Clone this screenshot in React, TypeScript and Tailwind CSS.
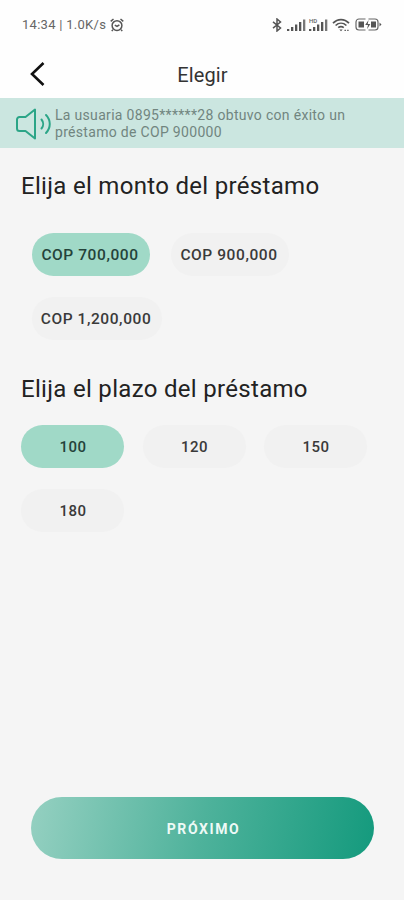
import { useState } from 'react';
import clsx from 'clsx';

const AMOUNTS = ['COP 700,000', 'COP 900,000', 'COP 1,200,000'];
const TERMS = ['100', '120', '150', '180'];

function SignalBars() {
  return (
    <svg width="19" height="13" viewBox="0 0 19 13" fill="#555">
      <rect x="0" y="11" width="2.3" height="2" />
      <rect x="4" y="9" width="2.3" height="4" />
      <rect x="8" y="6.5" width="2.3" height="6.5" />
      <rect x="12" y="4" width="2.3" height="9" />
      <rect x="16" y="1.5" width="2.3" height="11.5" opacity="0.8" />
    </svg>
  );
}

function StatusBar() {
  return (
    <div className="flex h-[49px] items-center pr-[22px] pl-[22px] text-[#666]">
      <span className="w-[85px] text-[13px] leading-none tracking-[0.28px] whitespace-nowrap">14:34 | 1.0K/s</span>
      {/* Alarm */}
      <svg className="ml-[3px]" width="14" height="14" viewBox="0 0 14 14" fill="none" stroke="#555" strokeWidth="1.5">
        <circle cx="7" cy="7.6" r="4.9" />
        <path d="M.7 3.3 3.5 1M13.3 3.3 10.5 1M2.9 11.6l-1.1 1.5M11.1 11.6l1.1 1.5M4.8 7.2 7 8.4l2.4-1.6" />
      </svg>

      <div className="ml-auto flex items-center">
        {/* Bluetooth */}
        <svg width="10" height="14" viewBox="0 0 10 14" fill="none" stroke="#555" strokeWidth="1.5">
          <path d="M1 3.8 8.5 10 5 13V1l3.5 3L1 10.2" />
        </svg>
        <div className="ml-[5px]">
          <SignalBars />
        </div>
        <div className="relative ml-[3px]">
          <SignalBars />
          <span className="absolute top-0 left-0 text-[6px] leading-none font-medium">HD</span>
        </div>
        {/* Wifi */}
        <svg className="ml-[4px]" width="18" height="14" viewBox="0 0 18 14" fill="none" stroke="#555" strokeWidth="1.7">
          <path d="M1 5.2c4.6-4.8 11.4-4.8 16 0M3.6 7.5c3.2-3 7.6-3 10.8 0M6.2 9.7c1.8-1.4 3.8-1.4 5.6 0" />
          <path d="M7.3 11.5h3.4L9 13.2z" fill="#555" stroke="none" />
          <path d="M12.5 12.4h1.4M15.2 12.4h1.4" strokeWidth="1.4" />
        </svg>
        {/* Battery */}
        <svg className="ml-[5px]" width="27" height="13" viewBox="0 0 27 13" fill="none" stroke="#666" strokeWidth="1.2">
          <path d="M10.5 1H4a3 3 0 0 0-3 3v5a3 3 0 0 0 3 3h6.5M13.5 1H20a3 3 0 0 1 3 3v5a3 3 0 0 1-3 3h-6.5" />
          <path d="M3.5 3.5H9v6H3.5zM16 3.5h5v6h-5zM24.5 4.5l2 2-2 2z" fill="#555" stroke="none" />
          <path d="m13.6 2-3.4 5H13l-1 4.2L15.3 6h-2.6z" fill="#555" stroke="none" />
        </svg>
      </div>
    </div>
  );
}

function Chip({ label, active, className, onClick }: { label: string; active: boolean; className?: string; onClick: () => void }) {
  return (
    <button
      onClick={onClick}
      className={clsx(
        'h-[43px] rounded-full leading-none font-medium whitespace-nowrap',
        active ? 'bg-[#a0d9c7] text-[#24433a]' : 'bg-[#f1f1f1] text-[#3a3a3a]',
        className
      )}
    >
      {label}
    </button>
  );
}

export default function App() {
  const [amount, setAmount] = useState(AMOUNTS[0]);
  const [term, setTerm] = useState(TERMS[0]);

  return (
    <div className="flex h-[900px] w-[404px] flex-col overflow-hidden bg-[#f5f5f5] font-['Roboto',sans-serif]">
      <div className="h-[98px] bg-[#fefefe]">
        <StatusBar />
        <header className="grid h-[49px] grid-cols-[60px_1fr_60px] items-center">
          <button className="pl-[30px]" aria-label="Atrás">
            <svg width="15" height="24" viewBox="0 0 15 24" fill="none" stroke="#111" strokeWidth="2.6">
              <path d="M13.5 1 2 12l11.5 11" />
            </svg>
          </button>
          <h1 className="pt-[2px] pl-px text-center text-[20px] leading-none tracking-[0.15px] text-[#333]">Elegir</h1>
        </header>
      </div>

      <div className="flex h-[50px] items-center bg-[#cbe6e0] pt-[2px] pl-[16px]">
        <svg width="36" height="32" viewBox="0 0 36 32" fill="none" stroke="#2ba587" strokeWidth="2" strokeLinejoin="round" strokeLinecap="round">
          <path d="M19 1.5v29L9.5 23h-6A2.5 2.5 0 0 1 1 20.5v-9A2.5 2.5 0 0 1 3.5 9h6z" />
          <path d="M25.5 11.5c2.2 2.600 2.2 6.400 0 9M30 7c5 5.200 5 12.800 0 18" />
        </svg>
        <p className="ml-[3px] text-[14px] leading-[17px] tracking-[0.31px] text-[#71857f]">
          La usuaria 0895******28 obtuvo con éxito un
          <br />
          préstamo de COP 900000
        </p>
      </div>

      <main className="flex flex-1 flex-col">
        <h2 className="mt-[26px] ml-[21px] text-[24px] leading-[24px] tracking-[0.31px] text-[#222]">Elija el monto del préstamo</h2>
        <div className="mt-[35px] ml-[32px] flex flex-wrap gap-[21px]">
          {AMOUNTS.map((a) => (
            <Chip
              key={a}
              label={a}
              active={a === amount}
              className={clsx('pt-[3px] pr-[2px] text-[15.5px] tracking-[0.57px]', a.length > 11 ? 'w-[130px]' : 'w-[118px]')}
              onClick={() => setAmount(a)}
            />
          ))}
        </div>

        <h2 className="mt-[37px] ml-[21px] text-[24px] leading-[24px] tracking-[0.31px] text-[#222]">Elija el plazo del préstamo</h2>
        <div className="mt-[24px] ml-[21px] grid grid-cols-[103px_103px_103px] gap-x-[18.5px] gap-y-[21px]">
          {TERMS.map((t) => (
            <Chip key={t} label={t} active={t === term} className="pt-px pl-px text-[15px] tracking-[0.5px]" onClick={() => setTerm(t)} />
          ))}
        </div>

        <button className="mx-auto mt-auto mb-[41px] h-[62px] w-[343px] rounded-full bg-linear-[100deg,#95d0c1_0%,#4eb29b_50%,#149a7d_100%] pt-[2px] pl-[3px] text-[14px] font-bold tracking-[1.6px] text-[#eefaf6]">
          PRÓXIMO
        </button>
      </main>
    </div>
  );
}
